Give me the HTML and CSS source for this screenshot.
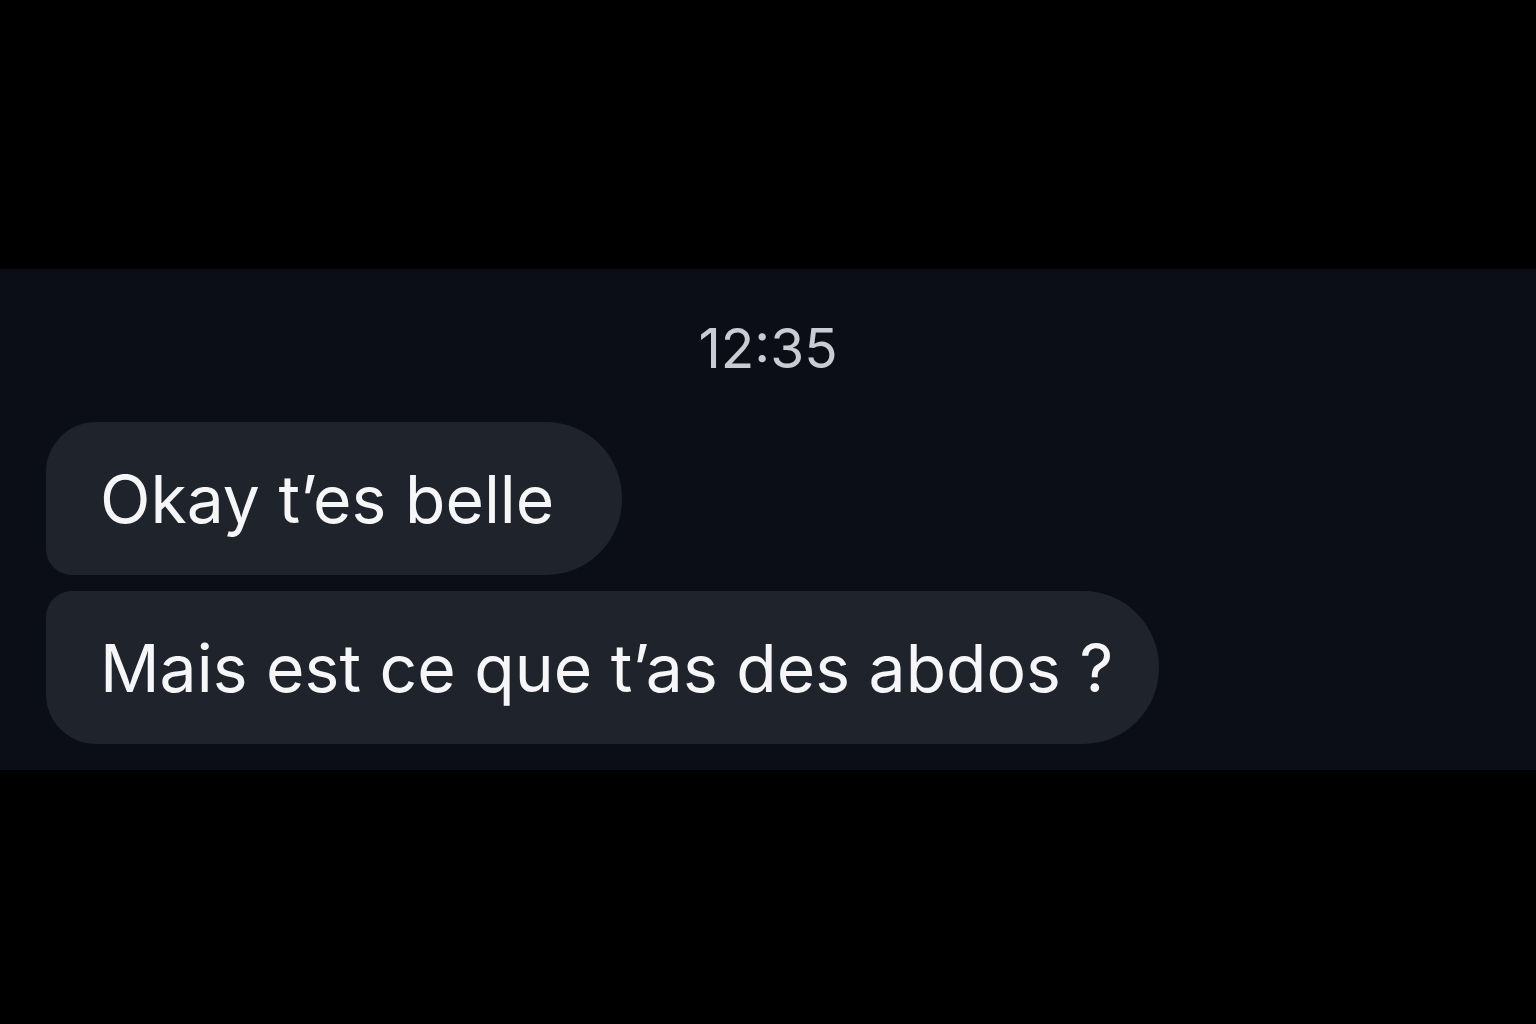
FILE: index.html
```html
<!DOCTYPE html>
<html lang="fr">
<head>
<meta charset="utf-8">
<title>Messages</title>
<link rel="stylesheet" href="styles.css">
</head>
<body>
  <main class="chat">
    <div class="time">12:35</div>
    <div class="thread">
      <div class="bubble first">Okay t’es belle</div>
      <div class="bubble last">Mais est ce que t’as des abdos ?</div>
    </div>
  </main>
</body>
</html>
```
FILE: styles.css
```css
html, body {
  margin: 0;
  padding: 0;
  background: #000;
  height: 100%;
}
body {
  font-family: Inter, "Noto Sans", "Liberation Sans", sans-serif;
  padding-top: 269px;
  box-sizing: border-box;
}
.chat {
  background: #0b0e16;
  height: 501px;
  box-sizing: border-box;
  padding: 49px 46px 0 46px;
  display: flex;
  flex-direction: column;
}
.time {
  color: #c9cdd3;
  font-size: 55px;
  line-height: 60px;
  text-align: center;
  margin-bottom: 44px;
}
.thread {
  display: flex;
  flex-direction: column;
  align-items: flex-start;
  gap: 16px;
}
.bubble {
  background: #1f232b;
  color: #f6f6f8;
  font-size: 66px;
  line-height: 155px;
  height: 153px;
  padding: 0 56px 0 54px;
  white-space: nowrap;
}
.bubble.first {
  padding-right: 68px;
  border-radius: 50px 76px 76px 26px;
}
.bubble.last {
  padding-right: 46px;
  border-radius: 26px 76px 76px 50px;
}
```
